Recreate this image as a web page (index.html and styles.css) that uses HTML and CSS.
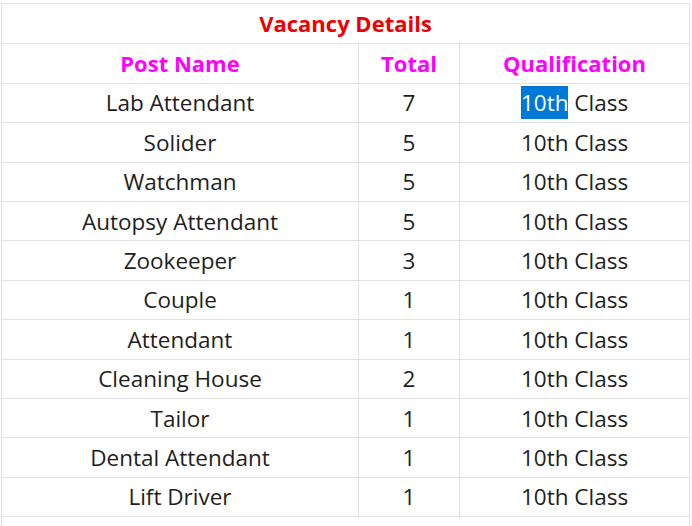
FILE: index.html
```html
<!DOCTYPE html>
<html>
<head>
<meta charset="utf-8">
<link rel="stylesheet" href="styles.css">
</head>
<body>
<div class="wrap">
<table class="vacancy">
  <colgroup>
    <col class="c1"><col class="c2"><col class="c3">
  </colgroup>
  <tr class="title-row"><td colspan="3">Vacancy Details</td></tr>
  <tr class="head-row"><td>Post Name</td><td>Total</td><td>Qualification</td></tr>
  <tr><td>Lab Attendant</td><td>7</td><td><span class="sel">10th</span> Class</td></tr>
  <tr><td>Solider</td><td>5</td><td>10th Class</td></tr>
  <tr><td>Watchman</td><td>5</td><td>10th Class</td></tr>
  <tr><td>Autopsy Attendant</td><td>5</td><td>10th Class</td></tr>
  <tr><td>Zookeeper</td><td>3</td><td>10th Class</td></tr>
  <tr><td>Couple</td><td>1</td><td>10th Class</td></tr>
  <tr><td>Attendant</td><td>1</td><td>10th Class</td></tr>
  <tr><td>Cleaning House</td><td>2</td><td>10th Class</td></tr>
  <tr><td>Tailor</td><td>1</td><td>10th Class</td></tr>
  <tr><td>Dental Attendant</td><td>1</td><td>10th Class</td></tr>
  <tr><td>Lift Driver</td><td>1</td><td>10th Class</td></tr>
  <tr class="tail-row"><td colspan="3">&nbsp;</td></tr>
</table>
</div>
</body>
</html>
```
FILE: styles.css
```css
html, body {
  margin: 0;
  padding: 0;
  background: #fff;
  overflow: hidden;
}
.wrap {
  padding: 3px 3px 0 1px;
}
.vacancy {
  width: 688px;
  border-collapse: collapse;
  table-layout: fixed;
  font-family: "Open Sans", "Noto Sans", sans-serif;
  font-size: 22.5px;
  color: #1e1e1e;
}
.c1 { width: 357px; }
.c2 { width: 101px; }
.c3 { width: 230px; }
.vacancy td {
  border: 1px solid #e2e2e2;
  text-align: center;
  padding: 4.5px 4px;
  line-height: 29.4px;
  white-space: nowrap;
}
.title-row td {
  color: #ee0000;
  font-weight: 700;
  font-size: 22px;
  padding: 5px 4px;
}
.head-row td {
  color: #ff00ff;
  font-weight: 700;
  font-size: 22px;
  padding: 4.5px 4px;
}
.sel {
  background: #0078d7;
  color: #fff;
  padding: 1px 0 1px;
}
```
